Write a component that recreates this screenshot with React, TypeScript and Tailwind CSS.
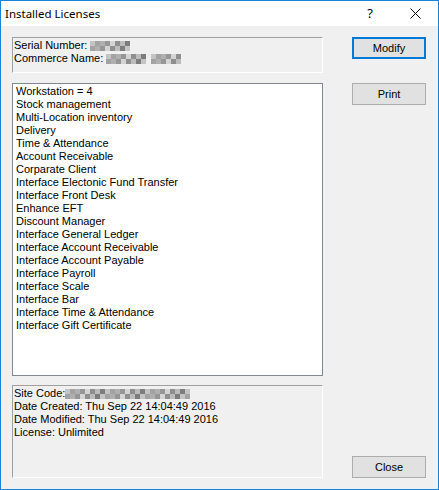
const licenses = [
  "Workstation = 4",
  "Stock management",
  "Multi-Location inventory",
  "Delivery",
  "Time & Attendance",
  "Account Receivable",
  "Corparate Client",
  "Interface Electonic Fund Transfer",
  "Interface Front Desk",
  "Enhance EFT",
  "Discount Manager",
  "Interface General Ledger",
  "Interface Account Receivable",
  "Interface Account Payable",
  "Interface Payroll",
  "Interface Scale",
  "Interface Bar",
  "Interface Time & Attendance",
  "Interface Gift Certificate",
];

const shades = [
  "bg-[#c4c4c4]",
  "bg-[#8f8f8f]",
  "bg-[#b0b0b0]",
  "bg-[#7d7d7d]",
  "bg-[#d4d4d4]",
  "bg-[#a3a3a3]",
  "bg-[#bcbcbc]",
  "bg-[#969696]",
];

// pixelated blur over the hidden values
function Mosaic({ cells, className = "" }: { cells: number; className?: string }) {
  return (
    <span className={`relative top-[2px] inline-grid h-[10px] grid-flow-col grid-rows-2 align-top ${className}`}>
      {Array.from({ length: cells * 2 }).map((_, i) => (
        <span key={i} className={`h-[5px] w-[5px] ${shades[(i * 5 + (i >> 1) * 3) % shades.length]}`} />
      ))}
    </span>
  );
}

function Button({ label, focused }: { label: string; focused?: boolean }) {
  return (
    <button
      className={`flex h-[22px] w-[74px] items-center justify-center bg-[#e1e1e1] text-[11px] text-black ${
        focused ? "border-2 border-[#0078d7]" : "border border-[#adadad]"
      }`}
    >
      {label}
    </button>
  );
}

export default function App() {
  return (
    <div
      className="flex h-[490px] w-[439px] flex-col border border-[#1883d7] bg-[#f0f0f0] text-black"
      style={{ fontFamily: '"Liberation Sans", Arial, sans-serif' }}
    >
      {/* title bar */}
      <div className="flex h-[25px] items-center bg-white">
        <span className="pl-[4px] text-[11.5px] leading-none" style={{ fontFamily: '"Noto Sans", sans-serif' }}>
          Installed Licenses
        </span>
        <span className="ml-auto mr-[37px] text-[13px] leading-none" style={{ fontFamily: '"Noto Sans", sans-serif' }}>
          ?
        </span>
        <svg className="mr-[17px]" width="11" height="11" viewBox="0 0 11 11">
          <path d="M0.5 0.5 L10.5 10.5 M10.5 0.5 L0.5 10.5" stroke="#000" strokeWidth="1" />
        </svg>
      </div>

      {/* body */}
      <div className="flex flex-1 px-[11px] py-[11px] text-[11px] leading-[13px]">
        <div className="flex w-[311px] flex-col">
          <div className="h-[36px] border border-b-white border-l-[#a0a0a0] border-r-white border-t-[#a0a0a0] pl-[1px] pt-[1px]">
            <div>
              Serial Number: <Mosaic cells={8} />
            </div>
            <div>
              Commerce Name: <Mosaic cells={8} />
              <Mosaic cells={6} className="ml-[5px]" />
            </div>
          </div>

          <div className="mt-[10px] h-[293px] border border-[#828790] bg-white pl-[3px] pt-[1px]">
            {licenses.map((l) => (
              <div key={l}>{l}</div>
            ))}
          </div>

          <div className="mt-[9px] h-[93px] border border-b-white border-l-[#a0a0a0] border-r-white border-t-[#a0a0a0] pl-[1px] pt-[1px]">
            <div>
              Site Code:
              <Mosaic cells={25} />
            </div>
            <div>Date Created: Thu Sep 22 14:04:49 2016</div>
            <div>Date Modified: Thu Sep 22 14:04:49 2016</div>
            <div>License: Unlimited</div>
          </div>
        </div>

        <div className="ml-[29px] flex flex-col">
          <Button label="Modify" focused />
          <div className="mt-[24px]">
            <Button label="Print" />
          </div>
          <div className="mt-auto">
            <Button label="Close" />
          </div>
        </div>
      </div>
    </div>
  );
}
